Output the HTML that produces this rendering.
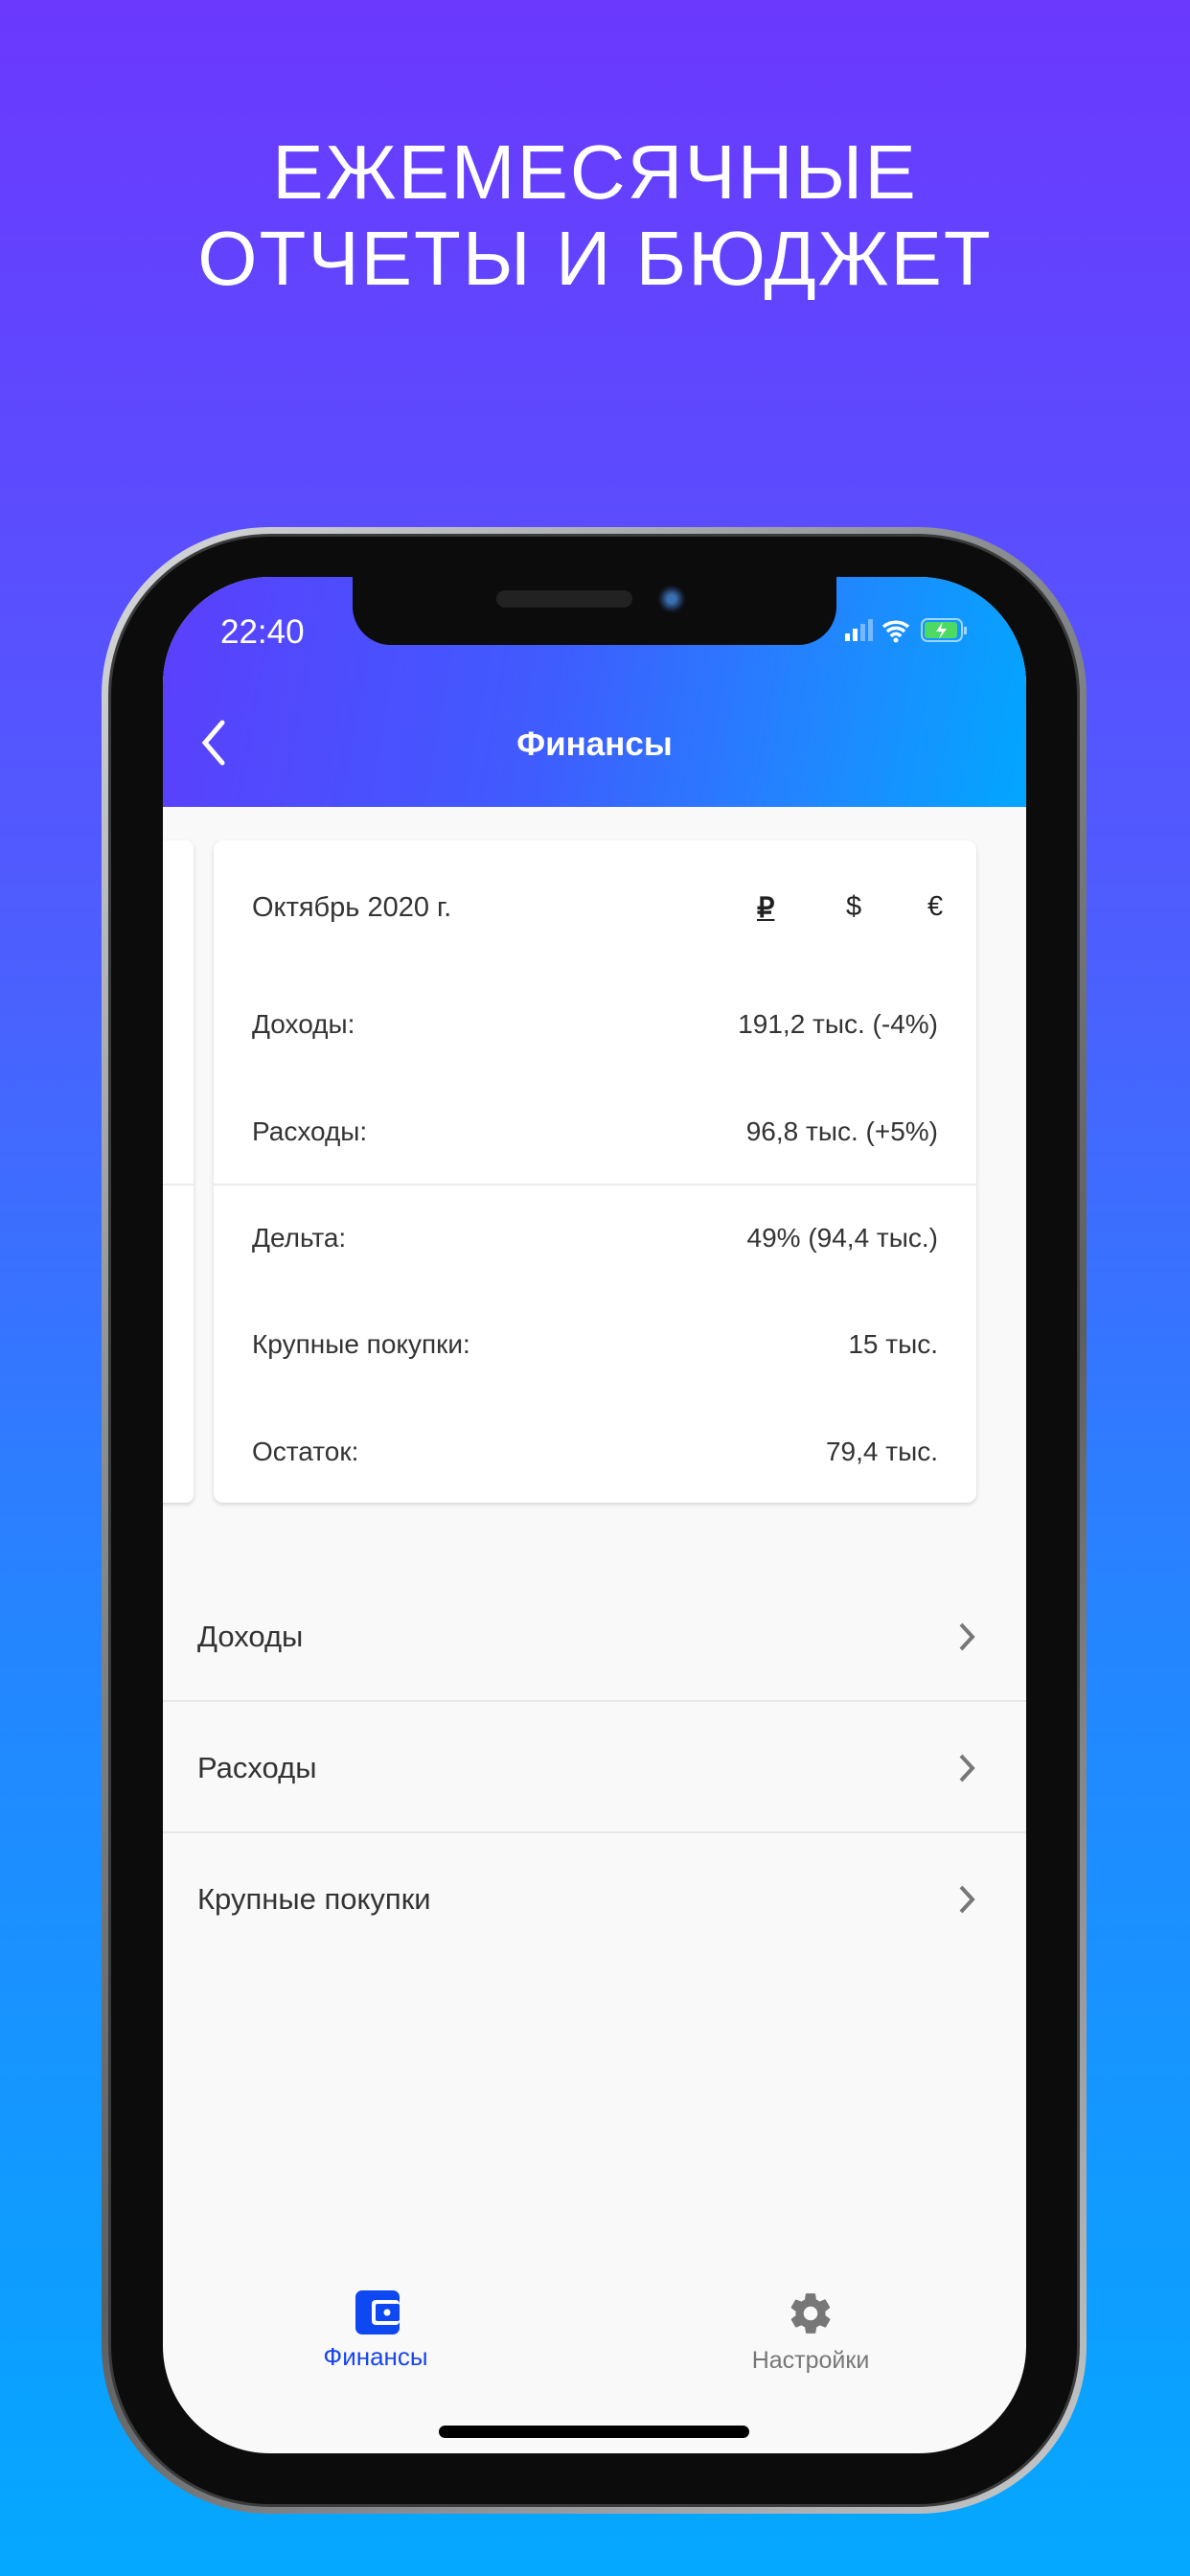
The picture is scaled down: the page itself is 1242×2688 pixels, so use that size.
<!DOCTYPE html>
<html><head><meta charset="utf-8"><style>
*{margin:0;padding:0;box-sizing:border-box}
body{width:1242px;height:2688px;overflow:hidden;background:linear-gradient(180deg,#6b38fe 0%,#4f5cfe 35%,#2684ff 62%,#04a8ff 100%);font-family:"Liberation Sans","Noto Sans CJK SC",sans-serif;position:relative}
.t{position:absolute;left:0;width:1242px;text-align:center;color:#fff;font-size:80px;letter-spacing:2px;line-height:1}
.abs{position:absolute}
.frame{left:106px;top:550px;width:1028px;height:2073px;border-radius:175px;background:linear-gradient(90deg,#9a9d a0,#e4e6e8 2%,#b8bbbe 4%,#6a6c6e 50%,#b8bbbe 96%,#e4e6e8 98%,#9a9da0);background:linear-gradient(135deg,#d8dadc,#8c8f92 30%,#5c5e60 60%,#c8cacc);}
.bez{left:116px;top:560px;width:1008px;height:2053px;border-radius:166px;background:#0c0c0c;box-shadow:0 0 0 3px #3a3b3c}
.screen{left:170px;top:602px;width:901px;height:1958px;border-radius:112px;background:#f9f9f9;overflow:hidden}
.hdr{left:0;top:0;width:901px;height:240px;background:linear-gradient(100deg,#5b3ffd 0%,#3f5cfe 45%,#1e8aff 78%,#02a6ff 100%)}
.notch{left:198px;top:0;width:505px;height:71px;background:#0c0c0c;border-radius:0 0 40px 40px}
.card{left:53px;top:275px;width:796px;height:691px;background:#fff;border-radius:10px;box-shadow:0 2px 5px rgba(0,0,0,.15)}
.row{position:absolute;left:40px;right:40px;font-size:28px;color:#333;display:flex;justify-content:space-between;line-height:34px}
.li{position:absolute;left:0;width:901px;height:137px;font-size:31px;color:#333;padding-left:36px;line-height:137px}
.li svg{position:absolute;right:52px;top:53px}
</style></head><body>
<div class="t" style="top:140px">ЕЖЕМЕСЯЧНЫЕ</div>
<div class="t" style="top:230px">ОТЧЕТЫ И БЮДЖЕТ</div>
<div class="abs frame"></div>
<div class="abs bez"></div>
<div class="abs screen">
 <div class="abs hdr"></div>
 <div class="abs notch"><div class="abs" style="left:150px;top:14px;width:142px;height:18px;border-radius:9px;background:#222"></div><div class="abs" style="left:318px;top:8px;width:30px;height:30px;border-radius:50%;background:radial-gradient(#3b6fb0 20%,#152035 55%,#0c0c0c 70%)"></div></div>
 <div class="abs" style="left:60px;top:38px;color:#fff;font-size:35px">22:40</div>
 <svg class="abs" style="left:706px;top:41px" width="150" height="30"><rect x="6" y="18" width="5" height="8" fill="#fff"/><rect x="14" y="13" width="5" height="13" fill="#fff"/><rect x="22" y="8" width="5" height="18" fill="#fff" opacity=".4"/><rect x="30" y="3" width="5" height="23" fill="#fff" opacity=".4"/>
 <path d="M46 11a20 20 0 0 1 26 0M50 16a13 13 0 0 1 18 0M54 21a6 6 0 0 1 10 0" stroke="#fff" stroke-width="3.5" fill="none"/><circle cx="59" cy="25" r="2.5" fill="#fff"/>
 <rect x="86" y="3" width="42" height="23" rx="6" fill="none" stroke="#fff" stroke-opacity=".6" stroke-width="2"/><rect x="89" y="6" width="34" height="17" rx="3" fill="#4cd964"/><rect x="130" y="11" width="3" height="8" fill="#fff" opacity=".6"/><path d="M108 6l-7 10h6l-3 8 8-11h-6z" fill="#fff"/></svg>
 <svg class="abs" style="left:37px;top:148px" width="30" height="50"><path d="M25 4L7 25l18 21" stroke="#fff" stroke-width="5" fill="none" stroke-linecap="round"/></svg>
 <div class="abs" style="left:0;width:901px;top:155px;text-align:center;color:#fff;font-size:35px;font-weight:bold">Финансы</div>
 <div class="abs" style="left:-20px;top:275px;width:52px;height:691px;background:#fff;border-radius:8px;box-shadow:0 2px 5px rgba(0,0,0,.15)"></div>
 <div class="abs" style="left:0;top:633px;width:32px;height:2px;background:#ececec"></div>
 <div class="abs card">
  <div class="row" style="top:53px;font-size:29px"><span>Октябрь 2020 г.</span></div>
  <div class="abs" style="left:567px;top:53px;font-size:29px;color:#222;font-weight:bold;text-decoration:underline">₽</div>
  <div class="abs" style="left:660px;top:53px;font-size:29px;color:#222">$</div>
  <div class="abs" style="left:745px;top:53px;font-size:29px;color:#222">€</div>
  <div class="row" style="top:175px"><span>Доходы:</span><span>191,2 тыс. (-4%)</span></div>
  <div class="row" style="top:287px"><span>Расходы:</span><span>96,8 тыс. (+5%)</span></div>
  <div class="abs" style="left:0;top:358px;width:796px;height:2px;background:#ececec"></div>
  <div class="row" style="top:398px"><span>Дельта:</span><span>49% (94,4 тыс.)</span></div>
  <div class="row" style="top:509px"><span>Крупные покупки:</span><span>15 тыс.</span></div>
  <div class="row" style="top:621px"><span>Остаток:</span><span>79,4 тыс.</span></div>
 </div>
 <div class="li" style="top:1037px">Доходы<svg width="20" height="32"><path d="M4 3l12 13L4 29" stroke="#777" stroke-width="4" fill="none"/></svg></div>
 <div class="abs" style="left:0;top:1172px;width:901px;height:2px;background:#e8e8e8"></div>
 <div class="li" style="top:1174px">Расходы<svg width="20" height="32"><path d="M4 3l12 13L4 29" stroke="#777" stroke-width="4" fill="none"/></svg></div>
 <div class="abs" style="left:0;top:1309px;width:901px;height:2px;background:#e8e8e8"></div>
 <div class="li" style="top:1311px">Крупные покупки<svg width="20" height="32"><path d="M4 3l12 13L4 29" stroke="#777" stroke-width="4" fill="none"/></svg></div>
 <svg class="abs" style="left:201px;top:1788px" width="46" height="46"><rect x="0" y="0" width="46" height="46" rx="7" fill="#0d48f2"/><rect x="17" y="10" width="29" height="26" rx="4" fill="#fff"/><rect x="21" y="14" width="25" height="18" rx="2" fill="#0d48f2"/><circle cx="33" cy="23" r="3.5" fill="#fff"/></svg>
 <div class="abs" style="left:122px;top:1842px;width:200px;text-align:center;color:#1845ef;font-size:26px">Финансы</div>
 <svg class="abs" style="left:651px;top:1787px" width="50" height="50" viewBox="0 0 24 24"><path fill="#777" d="M19.4 13c.04-.33.06-.66.06-1s-.02-.67-.06-1l2.1-1.65a.5.5 0 0 0 .12-.64l-2-3.46a.5.5 0 0 0-.6-.22l-2.5 1a7.3 7.3 0 0 0-1.7-1l-.38-2.65A.5.5 0 0 0 14 2h-4a.5.5 0 0 0-.5.42l-.38 2.650c-.6.25-1.17.6-1.7 1l-2.5-1a.5.5 0 0 0-.6.22l-2 3.46a.5.5 0 0 0 .12.64L4.6 11c-.04.33-.07.66-.07 1s.03.67.07 1l-2.1 1.65a.5.5 0 0 0-.12.64l2 3.46c.12.22.4.3.6.22l2.5-1c.53.4 1.1.74 1.7 1l.38 2.65c.04.24.25.42.5.42h4c.25 0 .46-.18.5-.42l.38-2.65c.6-.26 1.17-.6 1.7-1l2.5 1c.22.08.48 0 .6-.22l2-3.46a.5.5 0 0 0-.12-.64L19.4 13zM12 15.5A3.5 3.5 0 1 1 12 8.5a3.5 3.5 0 0 1 0 7z"/></svg>
 <div class="abs" style="left:576px;top:1847px;width:200px;text-align:center;color:#777;font-size:25px">Настройки</div>
 <div class="abs" style="left:288px;top:1929px;width:324px;height:13px;border-radius:7px;background:#000"></div>
</div>
</body></html>
